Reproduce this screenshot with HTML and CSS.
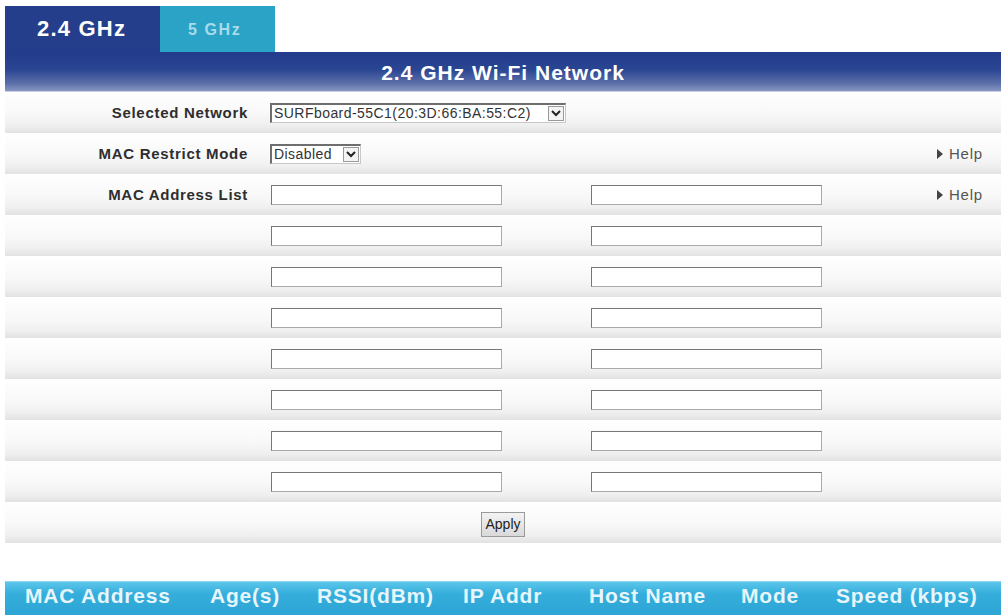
FILE: index.html
```html
<!DOCTYPE html>
<html>
<head>
<meta charset="utf-8">
<link rel="stylesheet" href="styles.css">
</head>
<body>
<div class="page">
  <div class="tabs">
    <div class="tab tab-active">2.4 GHz</div>
    <div class="tab tab-other">5 GHz</div>
  </div>
  <div class="titlebar">2.4 GHz Wi-Fi Network</div>
  <div class="rows">
    <div class="row">
      <div class="label">Selected Network</div>
      <div class="cell">
        <span class="sel sel-wide"><span class="sel-text">SURFboard-55C1(20:3D:66:BA:55:C2)</span><span class="sel-arrow"><svg width="12" height="10" viewBox="0 0 12 10"><path d="M2 3 L6 7 L10 3" fill="none" stroke="#222" stroke-width="2"/></svg></span></span>
      </div>
    </div>
    <div class="row">
      <div class="label">MAC Restrict Mode</div>
      <div class="cell">
        <span class="sel sel-small"><span class="sel-text">Disabled</span><span class="sel-arrow"><svg width="12" height="10" viewBox="0 0 12 10"><path d="M2 3 L6 7 L10 3" fill="none" stroke="#222" stroke-width="2"/></svg></span></span>
        <span class="help"><span class="tri"></span>Help</span>
      </div>
    </div>
    <div class="row">
      <div class="label">MAC Address List</div>
      <div class="cell">
        <input class="mac" type="text"><input class="mac mac-right" type="text">
        <span class="help"><span class="tri"></span>Help</span>
      </div>
    </div>
    <div class="row"><div class="label"></div><div class="cell"><input class="mac" type="text"><input class="mac mac-right" type="text"></div></div>
    <div class="row"><div class="label"></div><div class="cell"><input class="mac" type="text"><input class="mac mac-right" type="text"></div></div>
    <div class="row"><div class="label"></div><div class="cell"><input class="mac" type="text"><input class="mac mac-right" type="text"></div></div>
    <div class="row"><div class="label"></div><div class="cell"><input class="mac" type="text"><input class="mac mac-right" type="text"></div></div>
    <div class="row"><div class="label"></div><div class="cell"><input class="mac" type="text"><input class="mac mac-right" type="text"></div></div>
    <div class="row"><div class="label"></div><div class="cell"><input class="mac" type="text"><input class="mac mac-right" type="text"></div></div>
    <div class="row"><div class="label"></div><div class="cell"><input class="mac" type="text"><input class="mac mac-right" type="text"></div></div>
    <div class="row row-apply"><button class="apply">Apply</button></div>
  </div>
  <div class="clients">
    <div>MAC Address</div>
    <div>Age(s)</div>
    <div>RSSI(dBm)</div>
    <div>IP Addr</div>
    <div>Host Name</div>
    <div>Mode</div>
    <div>Speed (kbps)</div>
  </div>
</div>
</body>
</html>
```
FILE: styles.css
```css
html, body {
  margin: 0;
  padding: 0;
  background: #ffffff;
  font-family: "Liberation Sans", Arial, sans-serif;
}
.page {
  padding: 6px 3px 0 5px;
  width: 996px;
}
.tabs {
  display: flex;
  height: 46px;
}
.tab {
  display: flex;
  align-items: center;
  font-weight: bold;
}
.tab-active {
  width: 155px;
  background: #253e8c;
  color: #ffffff;
  font-size: 22px;
  letter-spacing: 1.2px;
  padding-left: 32px;
  box-sizing: border-box;
}
.tab-other {
  width: 115px;
  background: #2aa3c6;
  color: #a8dbe9;
  font-size: 16px;
  letter-spacing: 1.6px;
  padding-left: 28px;
  box-sizing: border-box;
  padding-top: 2px;
}
.titlebar {
  height: 40px;
  background: linear-gradient(to bottom, #223b8b 0%, #2a4592 45%, #5a6ea8 80%, #8796c2 100%);
  color: #ffffff;
  font-weight: bold;
  font-size: 21px;
  letter-spacing: 1px;
  text-align: center;
  line-height: 41px;
  border-bottom: 1px solid #c9d0e4;
  box-sizing: border-box;
}
.rows {
  display: flex;
  flex-direction: column;
}
.row {
  height: 41px;
  display: grid;
  grid-template-columns: 243px 1fr;
  column-gap: 22px;
  align-items: center;
  background: linear-gradient(to bottom, #ffffff 0%, #f8f8f8 55%, #efefef 82%, #e2e2e2 100%);
}
.label {
  text-align: right;
  font-weight: bold;
  font-size: 15px;
  letter-spacing: 0.7px;
  color: #2e2e2e;
}
.cell {
  display: flex;
  align-items: center;
  padding-right: 18px;
}
.sel {
  display: inline-flex;
  align-items: center;
  height: 20px;
  box-sizing: border-box;
  border-top: 2px solid #6e6e6e;
  border-left: 2px solid #6e6e6e;
  border-right: 1px solid #c8c8c8;
  border-bottom: 1px solid #c8c8c8;
  background: #ffffff;
  font-size: 14px;
  letter-spacing: 0.45px;
  color: #333333;
}
.sel-wide { width: 296px; }
.sel-small { width: 91px; }
.sel-text {
  flex: 1;
  padding-left: 2px;
  white-space: nowrap;
  overflow: hidden;
}
.sel-arrow {
  width: 16px;
  height: 15px;
  margin-right: 1px;
  border: 1px solid #9a9a9a;
  box-sizing: border-box;
  display: flex;
  align-items: center;
  justify-content: center;
  background: #f4f4f4;
}
.mac {
  width: 231px;
  height: 20px;
  box-sizing: border-box;
  margin: 0 0 0 1px;
  padding: 0;
  border-top: 1px solid #777777;
  border-left: 1px solid #777777;
  border-right: 1px solid #aaaaaa;
  border-bottom: 1px solid #aaaaaa;
  background: #ffffff;
}
.mac-right {
  margin-left: 89px;
}
.help {
  margin-left: auto;
  display: flex;
  align-items: center;
  font-size: 15px;
  letter-spacing: 0.8px;
  color: #555555;
}
.tri {
  width: 0;
  height: 0;
  border-top: 5px solid transparent;
  border-bottom: 5px solid transparent;
  border-left: 6px solid #444444;
  margin-right: 6px;
}
.row-apply {
  display: flex;
  justify-content: center;
}
.apply {
  height: 25px;
  width: 44px;
  padding: 0;
  font-family: "Liberation Sans", Arial, sans-serif;
  font-size: 14px;
  color: #222222;
  border: 1px solid #9a9a9a;
  background: linear-gradient(to bottom, #f3f3f3, #d9d9d9);
  margin-top: 3px;
}
.clients {
  margin-top: 38px;
  height: 40px;
  display: grid;
  grid-template-columns: 185px 107px 146px 126px 152px 95px auto;
  padding-left: 20px;
  padding-top: 2px;
  box-sizing: border-box;
  background: linear-gradient(to bottom, #5cc6ea 0%, #35aedc 30%, #2aa2d2 100%);
  border-top: 1px solid #8fd9f0;
  color: #e6f6fc;
  font-weight: bold;
  font-size: 21px;
  letter-spacing: 0.8px;
  white-space: nowrap;
}
```
